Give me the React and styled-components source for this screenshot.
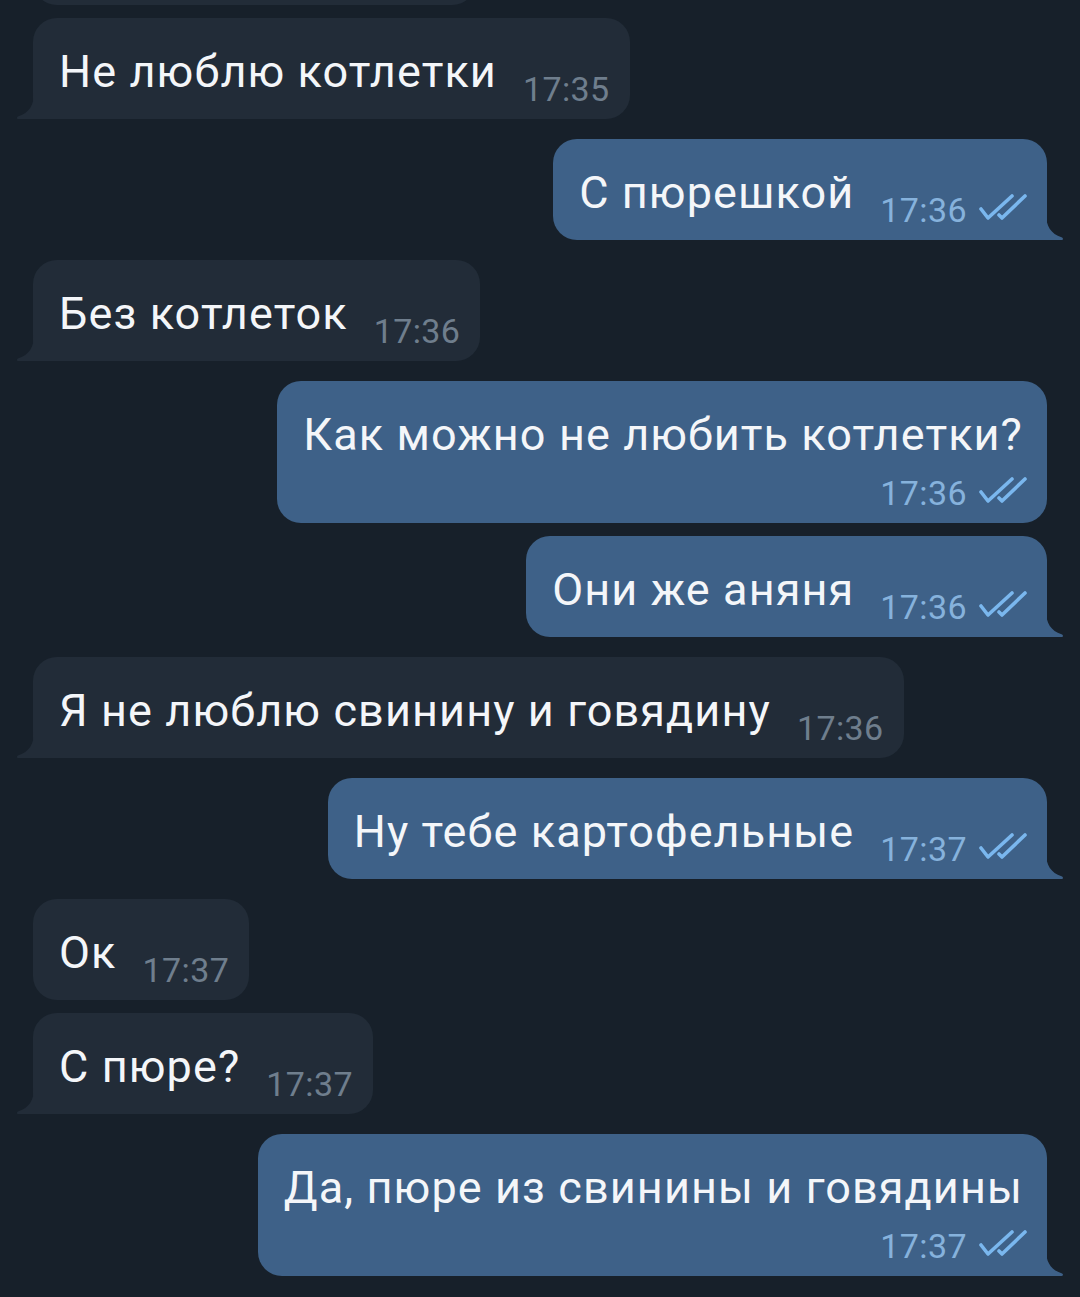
import React from 'react';
import styled, { createGlobalStyle, css } from 'styled-components';

const GlobalStyle = createGlobalStyle`
  html, body {
    margin: 0;
    padding: 0;
    background: #17202a;
    overflow: hidden;
  }
  body {
    font-family: Roboto, 'Noto Sans', 'DejaVu Sans', sans-serif;
    -webkit-font-smoothing: antialiased;
  }
`;

const Chat = styled.div`
  width: 1080px;
  height: 1297px;
  overflow: hidden;
  background: #17202a;
`;

const List = styled.div`
  display: flex;
  flex-direction: column;
  padding: 0 33px;
  margin-top: -96px;
`;

const Row = styled.div`
  display: flex;
  justify-content: ${p => (p.out ? 'flex-end' : 'flex-start')};
  margin-top: ${p => (p.first ? 0 : p.grouped ? 13 : 20)}px;
`;

const Bubble = styled.div`
  position: relative;
  display: flex;
  flex-direction: ${p => (p.stacked ? 'column' : 'row')};
  align-items: flex-end;
  padding: 27px 20px 10px 26px;
  border-radius: 24px;
  background: ${p => (p.out ? '#3e6188' : '#222c38')};
  ${p => p.tail && !p.out && css`border-bottom-left-radius: 0;`}
  ${p => p.tail && p.out && css`border-bottom-right-radius: 0;`}
`;

const Text = styled.div`
  font-size: 45px;
  line-height: 54px;
  letter-spacing: 1.1px;
  color: #f4f6f9;
  white-space: nowrap;
  align-self: flex-start;
  margin-bottom: ${p => (p.stacked ? 0 : 10)}px;
  padding-right: ${p => (p.stacked ? 4 : 0)}px;
`;

const Meta = styled.div`
  display: flex;
  align-items: flex-end;
  gap: 12px;
  margin-left: ${p => (p.stacked ? 0 : 26)}px;
  margin-top: ${p => (p.stacked ? 11 : 0)}px;
`;

const Time = styled.span`
  font-size: 34px;
  line-height: 40px;
  letter-spacing: 0.4px;
  color: ${p => (p.out ? '#86b2dc' : '#6f7e8d')};
`;

const Check = styled.svg`
  display: block;
  width: 48px;
  height: 26px;
  margin-bottom: 10px;
`;

const Tail = styled.svg`
  position: absolute;
  bottom: 0;
  width: 18px;
  height: 26px;
  ${p =>
    p.out
      ? css`right: -17px; transform: scaleX(-1);`
      : css`left: -17px;`}
`;

const messages = [
  { text: 'Ну я не знаю', time: '17:35', out: false },
  { text: 'Не люблю котлетки', time: '17:35', out: false, grouped: true, tail: true },
  { text: 'С пюрешкой', time: '17:36', out: true, tail: true },
  { text: 'Без котлеток', time: '17:36', out: false, tail: true },
  { text: 'Как можно не любить котлетки?', time: '17:36', out: true, stacked: true },
  { text: 'Они же аняня', time: '17:36', out: true, grouped: true, tail: true },
  { text: 'Я не люблю свинину и говядину', time: '17:36', out: false, tail: true },
  { text: 'Ну тебе картофельные', time: '17:37', out: true, tail: true },
  { text: 'Ок', time: '17:37', out: false },
  { text: 'С пюре?', time: '17:37', out: false, grouped: true, tail: true },
  { text: 'Да, пюре из свинины и говядины', time: '17:37', out: true, stacked: true, tail: true },
];

const DoubleCheck = () => (
  <Check viewBox="0 0 48 26" fill="none" stroke="#7ab7ee" strokeWidth="3.6" strokeLinecap="round" strokeLinejoin="round">
    <path d="M2 15 L9 24 L33 2" />
    <path d="M20 21 L23 24 L46 2" />
  </Check>
);

const BubbleTail = ({ out }) => (
  <Tail out={out} viewBox="0 0 18 26">
    <path
      d="M18 0 C18 12 13 20 2.5 23.2 C0.6 23.8 0.4 26 2.5 26 L18 26 Z"
      fill={out ? '#3e6188' : '#222c38'}
    />
  </Tail>
);

const Message = ({ msg, first }) => (
  <Row out={msg.out} grouped={msg.grouped} first={first}>
    <Bubble out={msg.out} tail={msg.tail} stacked={msg.stacked}>
      <Text stacked={msg.stacked}>{msg.text}</Text>
      <Meta stacked={msg.stacked}>
        <Time out={msg.out}>{msg.time}</Time>
        {msg.out && <DoubleCheck />}
      </Meta>
      {msg.tail && <BubbleTail out={msg.out} />}
    </Bubble>
  </Row>
);

export default function App() {
  return (
    <Chat>
      <GlobalStyle />
      <List>
        {messages.map((m, i) => (
          <Message key={i} msg={m} first={i === 0} />
        ))}
      </List>
    </Chat>
  );
}
